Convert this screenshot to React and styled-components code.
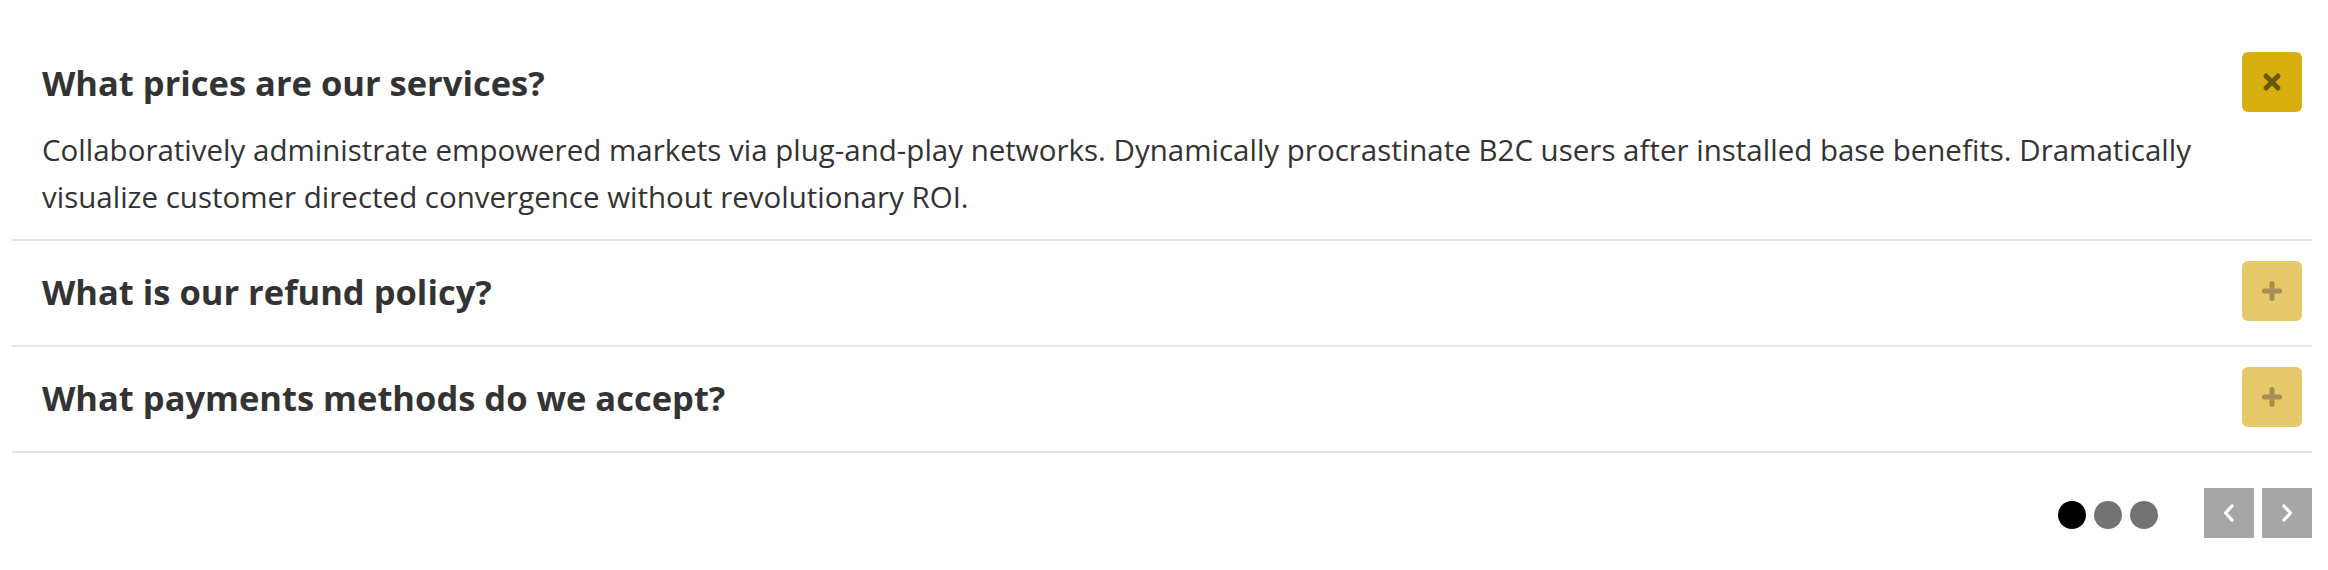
import React, { useState } from 'react';
import styled, { createGlobalStyle } from 'styled-components';

const GlobalStyle = createGlobalStyle`
  body {
    margin: 0;
    background: #fff;
    font-family: "Open Sans", "Noto Sans", sans-serif;
    color: #333;
  }
`;

const Wrapper = styled.div`
  padding: 32px 16px 0 12px;
`;

const Accordion = styled.div`
  display: flex;
  flex-direction: column;
`;

const Item = styled.div`
  padding: 20px 10px ${props => (props.open ? '19px' : '24px')} 30px;
  border-bottom: 2px solid #e5e5e5;
`;

const Header = styled.div`
  display: flex;
  align-items: center;
  justify-content: space-between;
  min-height: 60px;
`;

const Question = styled.h3`
  margin: 0;
  font-size: 34.5px;
  font-weight: 700;
  color: #333;
`;

const Toggle = styled.button`
  width: 60px;
  height: 60px;
  border: none;
  border-radius: 6px;
  padding: 0;
  display: flex;
  align-items: center;
  justify-content: center;
  cursor: pointer;
  background: ${props => (props.open ? '#d9ae0f' : '#e5c96a')};
  color: ${props => (props.open ? '#6b5806' : '#a68f50')};
`;

const Answer = styled.p`
  margin: 14px 0 0;
  font-size: 29.5px;
  line-height: 47px;
  color: #333;
`;

const Footer = styled.div`
  display: flex;
  align-items: center;
  justify-content: flex-end;
  margin-top: 35px;
`;

const Dots = styled.div`
  display: flex;
  gap: 8px;
  margin-right: 46px;
  margin-top: 4px;
`;

const Dot = styled.span`
  width: 28px;
  height: 28px;
  border-radius: 50%;
  background: ${props => (props.active ? '#000' : '#737373')};
`;

const Arrows = styled.div`
  display: flex;
  gap: 8px;
`;

const Arrow = styled.button`
  width: 50px;
  height: 50px;
  border: none;
  padding: 0;
  background: #a6a6a6;
  display: flex;
  align-items: center;
  justify-content: center;
  cursor: pointer;
`;

const CloseIcon = () => (
  <svg width="20" height="20" viewBox="0 0 20 20">
    <path d="M4 4L16 16M16 4L4 16" stroke="currentColor" strokeWidth="5" strokeLinecap="round" />
  </svg>
);

const PlusIcon = () => (
  <svg width="22" height="22" viewBox="0 0 22 22">
    <path d="M11 3.5V18.5M3.5 11H18.5" stroke="currentColor" strokeWidth="5" strokeLinecap="round" />
  </svg>
);

const Chevron = ({ dir }) => (
  <svg width="14" height="20" viewBox="0 0 14 20">
    {dir === 'left' ? (
      <path d="M10 3L3.5 10L10 17" fill="none" stroke="#fff" strokeWidth="3.2" strokeLinecap="round" strokeLinejoin="round" />
    ) : (
      <path d="M4 3L10.5 10L4 17" fill="none" stroke="#fff" strokeWidth="3.2" strokeLinecap="round" strokeLinejoin="round" />
    )}
  </svg>
);

const faqs = [
  {
    q: 'What prices are our services?',
    a: 'Collaboratively administrate empowered markets via plug-and-play networks. Dynamically procrastinate B2C users after installed base benefits. Dramatically visualize customer directed convergence without revolutionary ROI.',
  },
  {
    q: 'What is our refund policy?',
    a: 'Efficiently unleash cross-media information without cross-media value. Quickly maximize timely deliverables for real-time schemas.',
  },
  {
    q: 'What payments methods do we accept?',
    a: 'Completely synergize resource taxing relationships via premier niche markets. Professionally cultivate one-to-one customer service with robust ideas.',
  },
];

export default function App() {
  const [open, setOpen] = useState(0);
  const [page, setPage] = useState(0);

  return (
    <Wrapper>
      <GlobalStyle />
      <Accordion>
        {faqs.map((f, i) => (
          <Item key={i} open={open === i}>
            <Header>
              <Question>{f.q}</Question>
              <Toggle open={open === i} onClick={() => setOpen(open === i ? -1 : i)}>
                {open === i ? <CloseIcon /> : <PlusIcon />}
              </Toggle>
            </Header>
            {open === i && <Answer>{f.a}</Answer>}
          </Item>
        ))}
      </Accordion>
      <Footer>
        <Dots>
          {[0, 1, 2].map(d => (
            <Dot key={d} active={page === d} />
          ))}
        </Dots>
        <Arrows>
          <Arrow onClick={() => setPage((page + 2) % 3)}>
            <Chevron dir="left" />
          </Arrow>
          <Arrow onClick={() => setPage((page + 1) % 3)}>
            <Chevron dir="right" />
          </Arrow>
        </Arrows>
      </Footer>
    </Wrapper>
  );
}
